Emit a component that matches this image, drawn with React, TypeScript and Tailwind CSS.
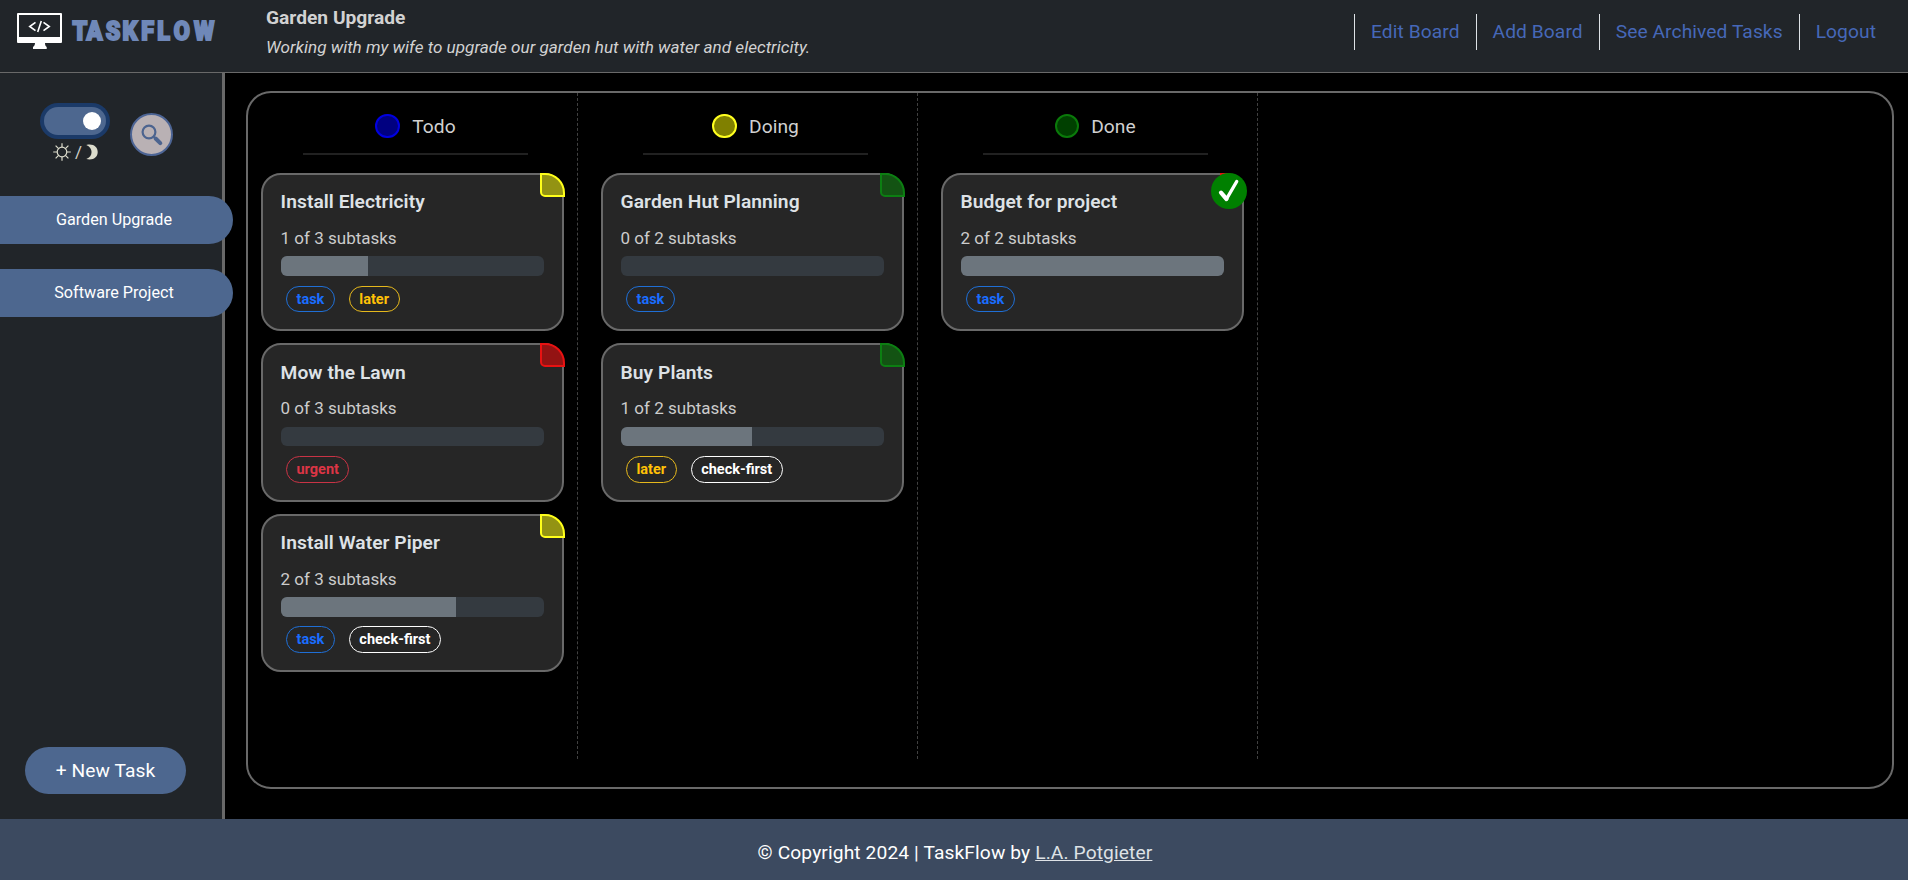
import React from "react";

type Priority = "high" | "medium" | "low";
type Tag = "task" | "later" | "urgent" | "check-first";

interface Task {
  title: string;
  done: number;
  total: number;
  priority: Priority;
  tags: Tag[];
}

interface Column {
  name: string;
  dot: string;
  tasks: Task[];
}

const columns: Column[] = [
  {
    name: "Todo",
    dot: "w-[25px] border-[#0000e0] bg-[#000080]",
    tasks: [
      { title: "Install Electricity", done: 1, total: 3, priority: "medium", tags: ["task", "later"] },
      { title: "Mow the Lawn", done: 0, total: 3, priority: "high", tags: ["urgent"] },
      { title: "Install Water Piper", done: 2, total: 3, priority: "medium", tags: ["task", "check-first"] },
    ],
  },
  {
    name: "Doing",
    dot: "w-[25px] border-[#ffff1f] bg-[#808000]",
    tasks: [
      { title: "Garden Hut Planning", done: 0, total: 2, priority: "low", tags: ["task"] },
      { title: "Buy Plants", done: 1, total: 2, priority: "low", tags: ["later", "check-first"] },
    ],
  },
  {
    name: "Done",
    dot: "w-[24px] border-[#0a7a0a] bg-[#004000]",
    tasks: [{ title: "Budget for project", done: 2, total: 2, priority: "high", tags: ["task"] }],
  },
];

const tagStyles: Record<Tag, string> = {
  task: "border-[#1f6fd6] text-[#1a6dff]",
  later: "border-[#e5b81c] text-[#ffc107]",
  urgent: "border-[#c93345] text-[#dc3545]",
  "check-first": "border-white text-white",
};

const cornerStyles: Record<Priority, string> = {
  high: "border-[#e81212] bg-[#931313]",
  medium: "border-[#ffff1a] bg-[#939313]",
  low: "border-[#0c7f12] bg-[#135313]",
};

function Logo() {
  return (
    <div className="flex items-center">
      <svg width="45" height="36" viewBox="0 0 45 36" className="block">
        <path
          fill="#fff"
          fillRule="evenodd"
          d="M1 0h43a1 1 0 0 1 1 1v28a1 1 0 0 1-1 1H28c0 2 .5 3.200 1.700 4v2H16v-2c1.200-.8 2-2 2-4H1a1 1 0 0 1-1-1V1a1 1 0 0 1 1-1ZM2 2v22h41V2Z"
        />
        <path d="m18.500 9.300-5.800 4.200 5.800 4.200M26.500 9.300l5.800 4.200-5.800 4.200M24.300 8l-3.600 11" fill="none" stroke="#fff" strokeWidth="1.600" />
      </svg>
      <svg width="156" height="36" viewBox="0 0 156 36" className="ml-[9px] block overflow-visible">
        <text
          transform="translate(1 27.200) scale(.88 1)"
          x="0.6 16.5 38.3 57.5 78.7 96.8 115.5 138.5"
          y="0"
          fill="#6f88b8"
          stroke="#6f88b8"
          strokeWidth="2"
          className="font-['Roboto',sans-serif] text-[26.500px] font-black"
        >
          TASKFLOW
        </text>
      </svg>
    </div>
  );
}

function Header() {
  const links = ["Edit Board", "Add Board", "See Archived Tasks", "Logout"];
  return (
    <header className="flex h-[73px] shrink-0 items-start border-b border-[#696969] bg-[#212529] pl-[17px] pr-4">
      <div className="w-[249px] pt-[13px]">
        <Logo />
      </div>
      <div className="grow text-[#d2d2d2]">
        <h1 className="mt-[6px] text-[19.200px] leading-6 font-bold">Garden Upgrade</h1>
        <p className="mt-[5px] text-[17.120px] leading-6 italic">
          Working with my wife to upgrade our garden hut with water and electricity.
        </p>
      </div>
      <nav className="flex pt-[14px]">
        {links.map((label) => (
          <a
            key={label}
            className="h-9 border-l border-[#dee2e6] px-4 text-[19.200px] leading-[35px] tracking-[0.08px] text-[#4668b8]"
          >
            {label}
          </a>
        ))}
      </nav>
    </header>
  );
}

function Sidebar() {
  return (
    <aside className="flex w-[225px] shrink-0 flex-col border-r-[3px] border-[#696969] bg-[#212529]">
      <div className="flex h-[123px] pl-[44px] pt-[34px]">
        <div className="w-[62px]">
          <div className="flex h-[28px] items-center justify-end rounded-full bg-[#4d678f] pr-[5px] shadow-[0_0_0_4px_#1b3a68]">
            <div className="size-[18px] rounded-full bg-white" />
          </div>
          <div className="mt-[8px] ml-[9px] flex items-center">
            <svg width="18" height="18" viewBox="0 0 18 18" fill="none" stroke="#dcdccc" strokeWidth="1.200">
              <circle cx="9" cy="9" r="4.800" />
              <path d="M9 .2v4M9 13.800v4M.2 9h4M13.800 9h4M2.600 2.600l3 3M12.400 12.400l3 3M2.600 15.400l3-3M12.400 5.600l3-3" />
            </svg>
            <span className="w-[15px] text-center text-[17px] leading-[18px] text-[#d0d0c8]">/</span>
            <svg width="12" height="16" viewBox="0 0 12 16">
              <path d="M.3.900C7.500-.8 11.700 3 11.700 8S7.500 16.700.3 15.100C7.300 12.500 7.300 3.500.3.900Z" fill="#dcdccc" />
            </svg>
          </div>
        </div>
        <div className="mt-[6px] ml-[24px] flex size-[43px] items-center justify-center rounded-full border-2 border-[#4d6595] bg-[#b9b1b4]">
          <svg width="24" height="24" viewBox="0 0 24 24" fill="none" stroke="#4c648f">
            <circle cx="9" cy="9" r="6.400" strokeWidth="2.200" />
            <path d="m13.500 13.400 2 2" strokeWidth="2" />
            <path d="m15.600 15.500 4.700 4.700" strokeWidth="4" strokeLinecap="round" />
          </svg>
        </div>
      </div>
      <div className="flex flex-col gap-[25px]">
        {["Garden Upgrade", "Software Project"].map((board) => (
          <button
            key={board}
            className="relative z-10 h-12 w-[233px] rounded-r-full bg-[#4d678f] pr-[5px] text-[16.160px] leading-6 text-white"
          >
            {board}
          </button>
        ))}
      </div>
      <button className="mt-auto mb-[25px] ml-[25px] h-[47px] w-[161px] rounded-full bg-[#4d678f] text-[19.200px] leading-6 tracking-[0.08px] text-white">
        + New Task
      </button>
    </aside>
  );
}

function TaskCard({ task }: { task: Task }) {
  return (
    <article className="relative h-[158.400px] w-[303px] rounded-[20px] border-2 border-[#696969] bg-[#262626] pt-[15.200px] pr-[18.400px] pl-[17.600px]">
      <div
        className={`absolute -top-[2px] -right-[3px] h-6 w-[25px] rounded-tr-[20px] rounded-bl-[5px] border-2 ${cornerStyles[task.priority]}`}
      />
      {task.done === task.total && (
        <div className="absolute -top-[2px] -right-[5px] size-[36px] rounded-full bg-[#008000]">
          <svg width="36" height="36" viewBox="0 0 36 36" fill="none" stroke="#fff" strokeLinecap="round" strokeLinejoin="round">
            <path d="M10 19.700 15.500 26" strokeWidth="4.200" />
            <path d="M15.500 26 25.700 8.500" strokeWidth="3.400" />
          </svg>
        </div>
      )}
      <h3 className="text-[19.200px] leading-[24px] font-semibold tracking-[0.06px] text-[#dee2e6]">{task.title}</h3>
      <p className="mt-[11.800px] text-[17px] leading-6 text-[#cccccc]">
        {task.done} of {task.total} subtasks
      </p>
      <div className="mt-[6.200px] h-[19.600px] overflow-hidden rounded-[6px] bg-[#343a40]">
        <div className="h-full bg-[#6c757d]" style={{ width: `${(task.done / task.total) * 100}%` }} />
      </div>
      <div className="mt-[9.800px] ml-[5.400px] flex gap-[14px]">
        {task.tags.map((tag) => (
          <span
            key={tag}
            className={`h-[26.600px] rounded-full border px-[9.500px] text-[14.500px] leading-[26px] font-bold ${tagStyles[tag]}`}
          >
            {tag}
          </span>
        ))}
      </div>
    </article>
  );
}

function BoardColumn({ column }: { column: Column }) {
  return (
    <section className="flex h-[666px] w-[330px] flex-col items-center border-r border-dashed border-[#414141]">
      <div className="ml-[6px] flex h-[62px] w-[225px] items-center justify-center gap-[12px] border-b-2 border-[#212121] pt-[5px]">
        <span className={`h-6 rounded-full border-2 ${column.dot}`} />
        <h2 className="pt-[2px] text-[19.200px] leading-6 tracking-[0.08px] text-[#d0d0d0]">{column.name}</h2>
      </div>
      <div className="mt-[18px] flex flex-col gap-3">
        {column.tasks.map((task) => (
          <TaskCard key={task.title} task={task} />
        ))}
      </div>
    </section>
  );
}

export default function App() {
  return (
    <div className="flex h-[880px] w-[1908px] flex-col overflow-hidden bg-black font-['Roboto',sans-serif]">
      <Header />
      <div className="flex min-h-0 grow">
        <Sidebar />
        <main className="flex grow pt-[18px] pr-[14px] pb-[30px] pl-[21px]">
          <div className="flex grow gap-[10px] rounded-[25px] border-2 border-[#696969]">
            {columns.map((column) => (
              <BoardColumn key={column.name} column={column} />
            ))}
          </div>
        </main>
      </div>
      <footer className="flex h-[61px] shrink-0 items-center justify-center bg-[#3c4a60] pt-[7px] pl-[2px] text-[19.200px] tracking-[0.12px] text-white">
        <p>
          © Copyright 2024 | TaskFlow by <a className="text-[#dee2e6] underline">L.A. Potgieter</a>
        </p>
      </footer>
    </div>
  );
}
